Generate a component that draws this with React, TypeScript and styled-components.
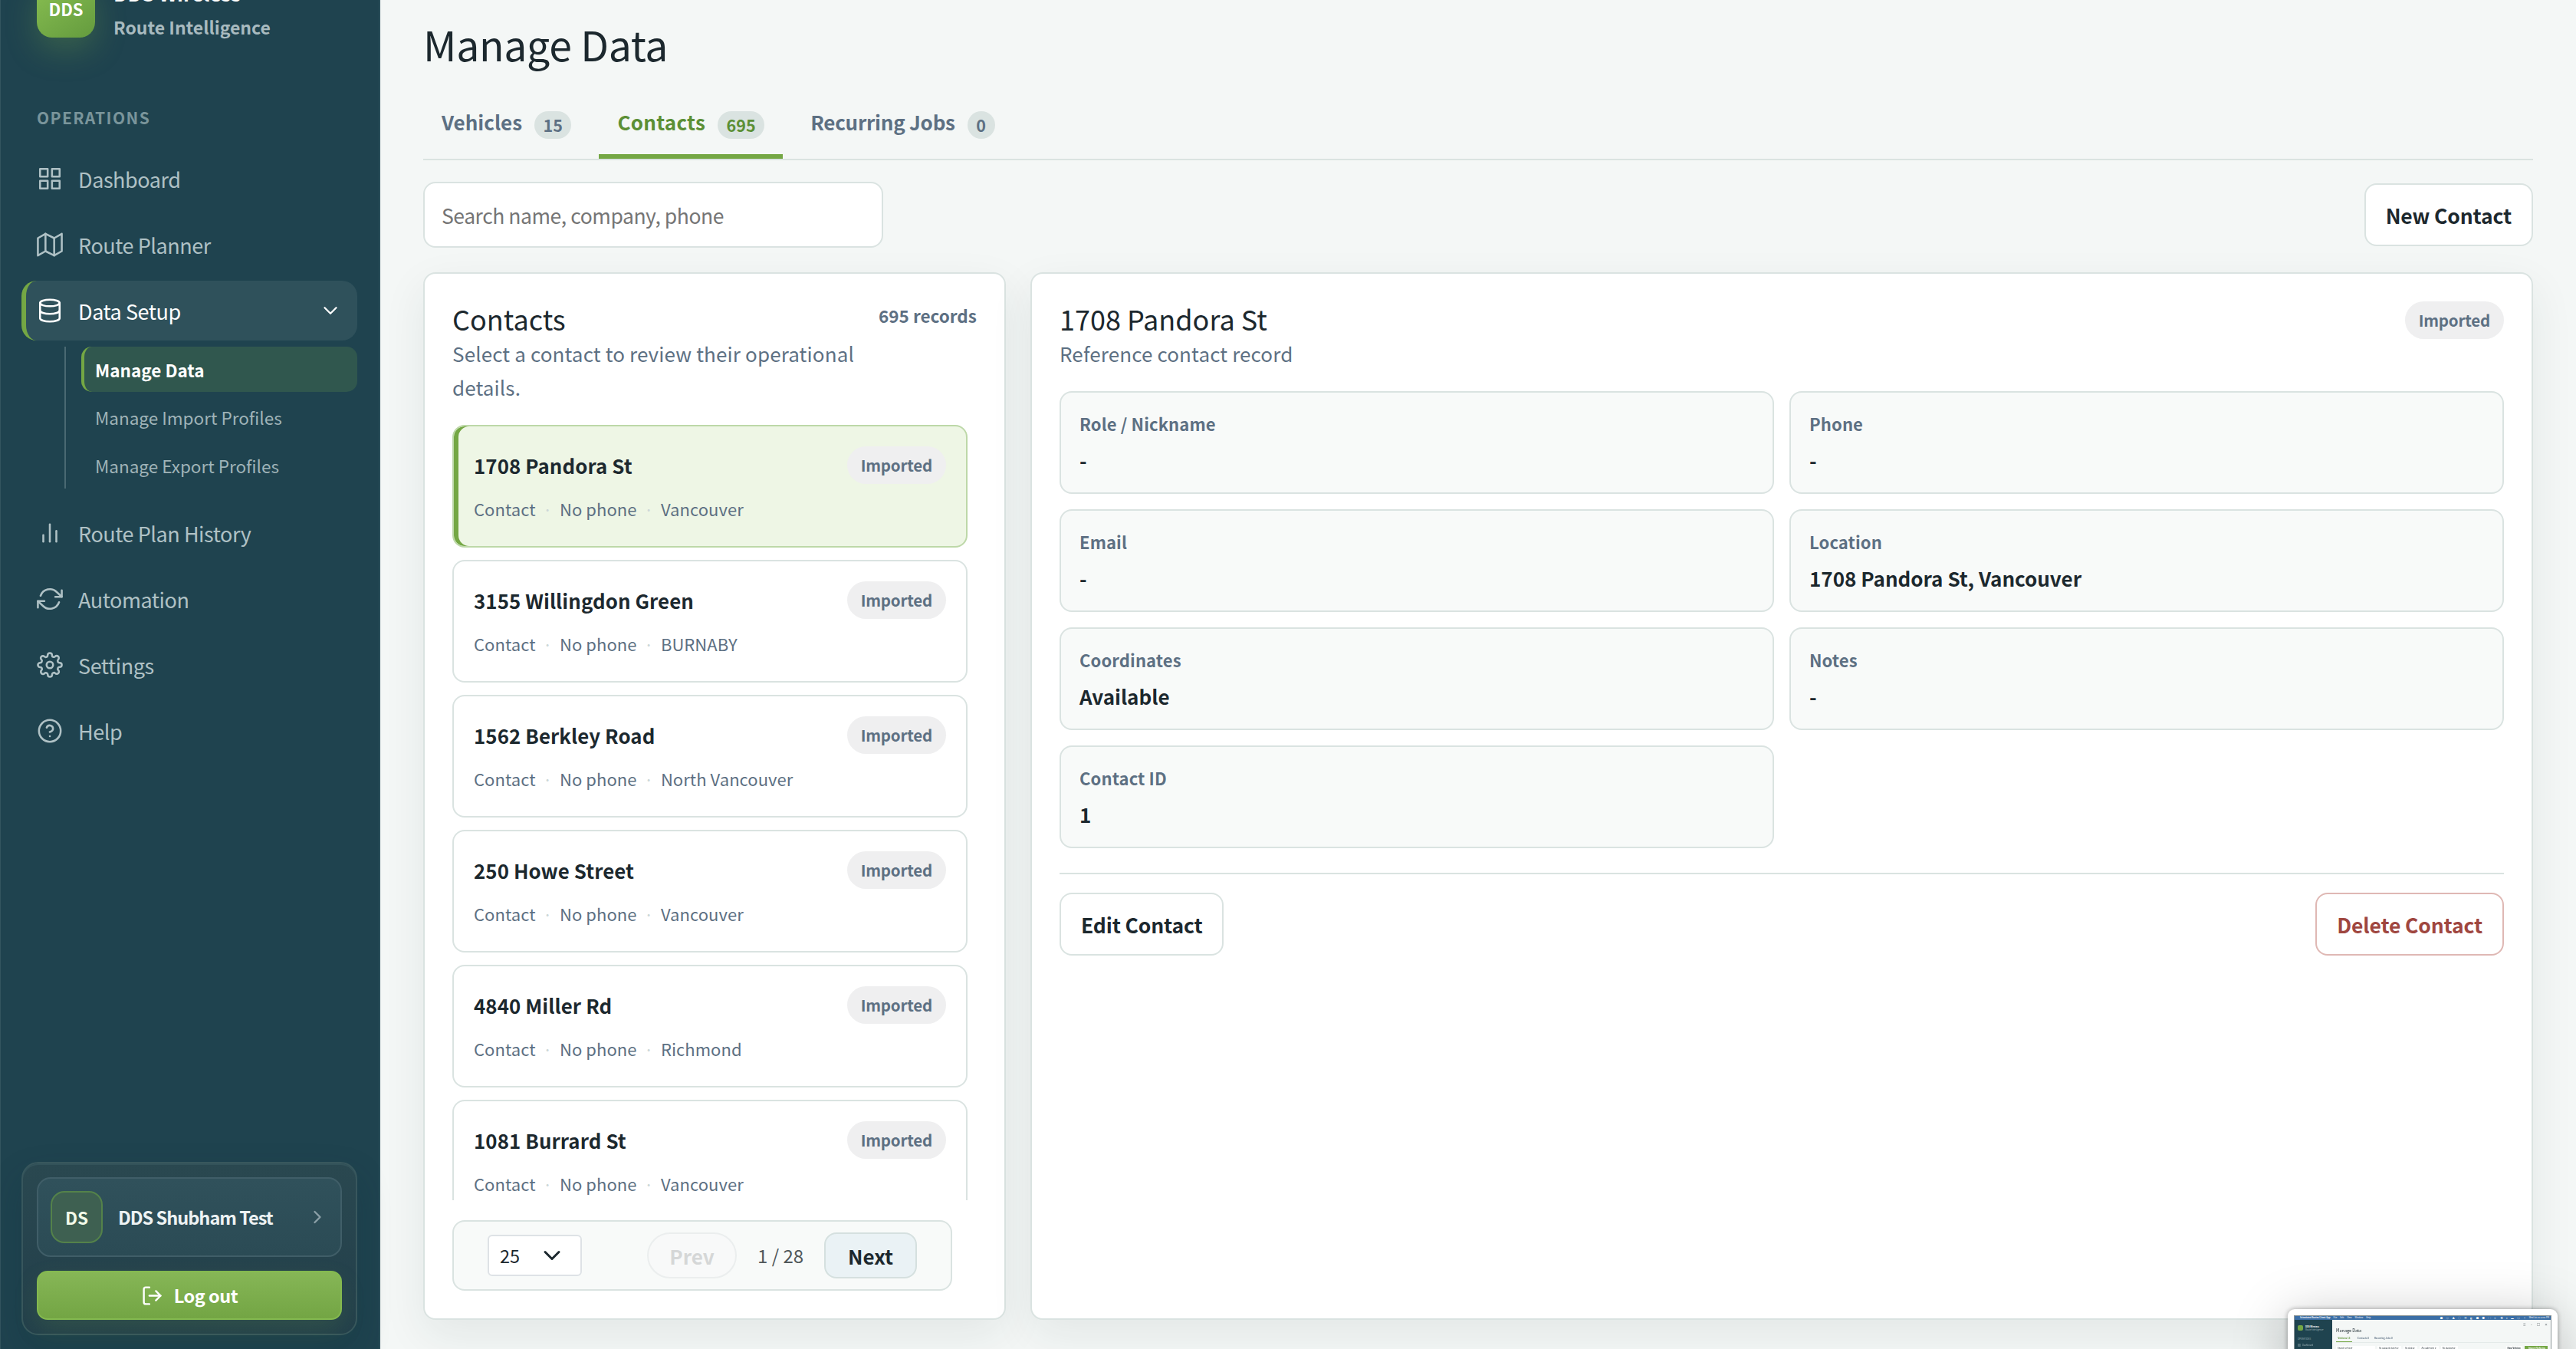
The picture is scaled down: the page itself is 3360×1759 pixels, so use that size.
import React from 'react'
import styled, { createGlobalStyle } from 'styled-components'
import {
  FiBarChart2,
  FiChevronDown,
  FiChevronRight,
  FiDatabase,
  FiGrid,
  FiHelpCircle,
  FiLogOut,
  FiMap,
  FiRefreshCw,
  FiSettings,
} from 'react-icons/fi'

const GlobalStyle = createGlobalStyle`
  * {
    box-sizing: border-box;
  }

  body {
    margin: 0;
    background: #f4f7f6;
    color: #1c282e;
    font-family: 'Noto Sans CJK JP', 'Noto Sans', sans-serif;
    font-size: 26px;
    overflow: hidden;
  }

  h1, h2, p {
    margin: 0;
    font-weight: 400;
  }

  button, input {
    font-family: inherit;
  }
`

const Layout = styled.div`
  display: flex;
  width: 3360px;
  height: 1759px;
  overflow: hidden;
`

/* ---------- sidebar ---------- */

const Sidebar = styled.aside`
  display: flex;
  flex-direction: column;
  flex: none;
  width: 496px;
  padding: 0 28px 18px 27px;
  border-left: 1px solid #33555f;
  border-right: 2px solid #2c505b;
  background: #1f434f;
`

const Brand = styled.div`
  display: flex;
  flex: none;
  gap: 24px;
  height: 76px;
  margin: -27px 0 0 20px;
`

const BrandMark = styled.div`
  width: 76px;
  height: 76px;
  border-radius: 20px;
  background: linear-gradient(145deg, #8ac052, #649b3e);
  box-shadow: 0 16px 40px rgba(116, 167, 68, 0.3);
  color: #fff;
  font-size: 22px;
  font-weight: 700;
  line-height: 77px;
  text-align: center;
`

const BrandText = styled.div`
  display: flex;
  flex-direction: column;
  font-weight: 700;
  white-space: nowrap;
`

const BrandName = styled.span`
  color: #fff;
  font-size: 26px;
  line-height: 36px;
`

const BrandTagline = styled.span`
  margin-top: 8px;
  color: #a8babf;
  font-size: 23px;
  font-weight: 600;
  line-height: 36px;
`

const NavHeading = styled.div`
  margin: 89px 0 26px 20px;
  color: #7a959b;
  font-size: 21px;
  font-weight: 700;
  letter-spacing: 1.4px;
  line-height: 30px;
`

const Nav = styled.nav`
  display: flex;
  flex-direction: column;
  gap: 8px;
`

const NavItem = styled.a<{ $active?: boolean }>`
  display: flex;
  align-items: center;
  width: 438px;
  height: 78px;
  padding: 0 20px 0 14px;
  border-left: 6px solid ${({ $active }) => ($active ? '#74a744' : 'transparent')};
  border-radius: 20px;
  background: ${({ $active }) => ($active ? '#2f515b' : 'transparent')};
  color: ${({ $active }) => ($active ? '#fff' : '#afc1c5')};
  font-size: 27px;
  letter-spacing: -0.45px;

  svg {
    stroke-width: 1.8;
  }

  span {
    flex: 1;
    margin-left: 20px;
  }
`

const SubNav = styled.div`
  display: flex;
  flex-direction: column;
  gap: 4px;
  width: 382px;
  margin: 0 0 11px 56px;
  padding-left: 20px;
  border-left: 2px solid #4a6972;
`

const SubNavItem = styled.a<{ $active?: boolean }>`
  height: 59px;
  padding-left: 14px;
  border-left: 4px solid ${({ $active }) => ($active ? '#74a744' : 'transparent')};
  border-radius: 14px;
  background: ${({ $active }) => ($active ? '#30574e' : 'transparent')};
  color: ${({ $active }) => ($active ? '#fff' : '#9fb3b8')};
  font-size: 22.5px;
  font-weight: ${({ $active }) => ($active ? 700 : 400)};
  line-height: ${({ $active }) => ($active ? 60 : 58)}px;
`

const AccountCard = styled.div`
  display: flex;
  flex-direction: column;
  gap: 18px;
  width: 438px;
  height: 226px;
  margin-top: auto;
  padding: 18px;
  border: 2px solid #38575d;
  border-radius: 22px;
  background: linear-gradient(180deg, #2a4850, #223f4b);
  box-shadow: inset 0 2px 0 #33535a, 0 20px 44px rgba(15, 45, 60, 0.22);
`

const AccountButton = styled.div`
  display: flex;
  align-items: center;
  height: 104px;
  padding: 0 16px 0 16px;
  border: 2px solid #405e68;
  border-radius: 18px;
  background: linear-gradient(180deg, #30515b, #2b4b55);
  color: #edf2f3;
  font-size: 23.5px;
  font-weight: 600;

  span {
    flex: 1;
    margin-left: 20px;
    letter-spacing: -1px;
  }

  svg {
    color: #8ba0a7;
  }
`

const Avatar = styled.div`
  width: 68px;
  height: 68px;
  border: 2px solid #54824a;
  border-radius: 18px;
  background: #3e6051;
  color: #f2fae8;
  font-size: 22.5px;
  line-height: 65px;
  text-align: center;
`

const LogoutButton = styled.button`
  display: flex;
  align-items: center;
  justify-content: center;
  gap: 14px;
  height: 64px;
  border: 2px solid #84b94f;
  border-radius: 14px;
  background: linear-gradient(180deg, #86b656, #73a544);
  box-shadow: 0 14px 32px rgba(116, 167, 68, 0.16);
  color: #fff;
  font-size: 23.5px;
  font-weight: 600;
  letter-spacing: -0.5px;
`

/* ---------- page ---------- */

const Main = styled.main`
  display: flex;
  flex: 1;
  flex-direction: column;
  padding: 22px 56px 38px;
`

const PageTitle = styled.h1`
  height: 99px;
  font-size: 53.5px;
  letter-spacing: -0.3px;
  line-height: 70px;
`

const Tabs = styled.div`
  display: flex;
  gap: 12px;
  height: 88px;
  border-bottom: 2px solid #dae3e1;
`

const Tab = styled.div<{ $active?: boolean; $tracking?: number }>`
  display: flex;
  gap: 16px;
  height: 86px;
  padding: 18px 24px 0;
  border-bottom: 6px solid ${({ $active }) => ($active ? '#74a744' : 'transparent')};
  color: ${({ $active }) => ($active ? '#5b8f35' : '#5d7083')};
  font-size: 26px;
  font-weight: 600;
  letter-spacing: ${({ $tracking = 0 }) => $tracking}px;
  line-height: 40px;
`

const TabCount = styled.span`
  min-width: 36px;
  height: 36px;
  margin-top: 6px;
  padding: 0 11.5px;
  border-radius: 18px;
  background: #dae3e1;
  font-size: 21.5px;
  font-weight: 700;
  letter-spacing: 0;
  line-height: 36px;
  text-align: center;
`

const Toolbar = styled.div`
  display: flex;
  align-items: center;
  justify-content: space-between;
  margin: 28px 0 32px;
`

const SearchInput = styled.input`
  width: 600px;
  height: 86px;
  padding: 0 22px;
  border: 2px solid #dae3e1;
  border-radius: 16px;
  background: #fff;
  font-size: 26.5px;
  letter-spacing: -0.45px;

  &::placeholder {
    color: #757575;
  }
`

const Button = styled.button<{ $danger?: boolean }>`
  height: 82px;
  padding: 0 26px;
  border: 2px solid ${({ $danger }) => ($danger ? '#dfb8b4' : '#dae3e1')};
  border-radius: 16px;
  background: #fff;
  color: ${({ $danger }) => ($danger ? '#9f463f' : '#1c282e')};
  font-size: 26.5px;
  font-weight: 600;
  letter-spacing: -0.15px;
`

const Columns = styled.div`
  display: grid;
  grid-template-columns: 760px 1fr;
  gap: 32px;
  height: 1366px;
`

const Panel = styled.section`
  display: flex;
  flex-direction: column;
  min-height: 0;
  padding: 36px;
  border: 2px solid #dae3e1;
  border-radius: 16px;
  background: #fff;
  box-shadow: 0 20px 56px rgba(31, 51, 55, 0.08);
`

const PanelHead = styled.div`
  display: flex;
  align-items: flex-start;
  justify-content: space-between;
  gap: 24px;
  margin-bottom: 27.5px;
`

const PanelTitle = styled.h2`
  font-size: 36px;
  line-height: 45px;
  margin-bottom: 1px;
`

const PanelText = styled.p`
  color: #5d7083;
  font-size: 26px;
  letter-spacing: 0.13px;
  line-height: 43.5px;
`

const RecordCount = styled.span`
  flex: none;
  color: #5d7083;
  font-size: 22.5px;
  font-weight: 600;
  line-height: 37px;
`

const Badge = styled.span`
  height: 49px;
  padding: 0 18px;
  border-radius: 25px;
  background: #efeff0;
  color: #5d7083;
  font-size: 20.5px;
  font-weight: 600;
  letter-spacing: -0.2px;
  line-height: 49px;
`

const ContactList = styled.div`
  display: flex;
  flex: 1;
  flex-direction: column;
  gap: 16px;
  min-height: 0;
  width: 672px;
  margin-bottom: 26px;
  overflow: hidden;
`

const ContactRow = styled.div<{ $selected?: boolean }>`
  flex: none;
  height: 160px;
  padding: 26px;
  border: 2px solid ${({ $selected }) => ($selected ? '#bdd8a8' : '#dae3e1')};
  border-radius: 16px;
  background: ${({ $selected }) => ($selected ? '#eef6e5' : '#fff')};
  box-shadow: ${({ $selected }) => ($selected ? 'inset 6px 0 0 #74a744' : 'none')};
`

const ContactTop = styled.div`
  display: flex;
  align-items: center;
  justify-content: space-between;
`

const ContactName = styled.span`
  font-size: 25.8px;
  font-weight: 600;
  letter-spacing: 0.1px;
`

const ContactMeta = styled.div`
  display: flex;
  gap: 9.5px;
  margin-top: 14px;
  color: #5d7083;
  font-size: 22px;
  letter-spacing: 0.05px;
  line-height: 36px;

  i {
    color: #cdd7d8;
    font-style: normal;
  }
`

const Pagination = styled.div`
  display: flex;
  align-items: center;
  width: 652px;
  height: 92px;
  padding-left: 44px;
  border: 2px solid #dae3e1;
  border-radius: 16px;
  background: #f8faf9;
`

const PageSize = styled.div`
  display: flex;
  align-items: center;
  justify-content: space-between;
  width: 123px;
  height: 54px;
  margin-right: 85px;
  padding: 0 19px 0 14px;
  border: 2px solid #dee2e6;
  border-radius: 6px;
  background: #fff;
  font-size: 23.5px;
`

const PageButton = styled.button`
  width: 121px;
  height: 60px;
  padding: 0;
  border: 2px solid #d5e0df;
  border-radius: 16px;
  background: #eaf2f5;
  color: #1c282e;
  font-size: 26px;
  font-weight: 600;

  &:disabled {
    width: 117px;
    border-color: #ebeeee;
    border-radius: 30px;
    background: #f8f9f9;
    color: #d5d7d7;
  }
`

const PageStatus = styled.span`
  width: 114px;
  color: #50575a;
  font-size: 24px;
  line-height: 32px;
  text-align: center;
`

const DetailGrid = styled.div`
  display: grid;
  grid-template-columns: 1fr 1fr;
  gap: 20px;
`

const DetailCard = styled.div`
  display: flex;
  flex-direction: column;
  height: 134px;
  padding: 22px 24px;
  border: 2px solid #dae3e1;
  border-radius: 16px;
  background: #f8faf9;
`

const DetailLabel = styled.span`
  color: #5d7083;
  font-size: 22px;
  font-weight: 600;
  letter-spacing: 0.12px;
  line-height: 37px;
`

const DetailValue = styled.span`
  margin-top: 7px;
  font-size: 26px;
  font-weight: 600;
  line-height: 43px;
`

const DetailActions = styled.div`
  display: flex;
  justify-content: space-between;
  margin-top: 32px;
  padding-top: 24px;
  border-top: 2px solid #dae3e1;
`

/* ---------- floating capture preview ---------- */

const Preview = styled.div`
  position: fixed;
  left: 2984px;
  top: 1707px;
  width: 352px;
  height: 230px;
  padding: 8px;
  border-radius: 9px;
  background: #fff;
  box-shadow: 0 0 6px rgba(0, 0, 0, 0.35), 0 12px 70px rgba(0, 0, 0, 0.26);
`

const PreviewScreen = styled.div`
  height: 100%;
  border: 1px solid #8d9698;
  background: #f4f7f6;
`

const PreviewMenuBar = styled.div`
  display: flex;
  align-items: center;
  gap: 4px;
  height: 5px;
  padding: 0 2px 0 3px;
  background: #3b6ea5;
  color: #fff;
  font-size: 2.8px;
  line-height: 5px;
  white-space: nowrap;

  b {
    margin-left: 4px;
  }
`

const PreviewStatusIcons = styled.div`
  display: flex;
  justify-content: space-between;
  width: 112px;
  margin-left: auto;
  font-size: 3.4px;
`

const PreviewBody = styled.div`
  display: flex;
  height: 100%;
`

const PreviewSidebar = styled.div`
  width: 49px;
  padding: 7px 4px;
  background: #1f434f;
  color: #9fb3b8;
  font-size: 2.8px;
  line-height: 4px;
`

const PreviewBrand = styled.div`
  display: flex;
  gap: 3px;
  height: 16px;

  b {
    color: #fff;
  }

  &::before {
    content: '';
    width: 7px;
    height: 7px;
    border-radius: 2px;
    background: #74a744;
  }
`

const PreviewNavItem = styled.div`
  display: flex;
  align-items: center;
  gap: 2px;
  margin-top: 4px;
`

const PreviewContent = styled.div`
  flex: 1;
  padding: 3px 4px 0 5px;
`

const PreviewWindowControls = styled.div`
  display: flex;
  justify-content: flex-end;
  gap: 6px;
  height: 6px;
  font-size: 4px;
  line-height: 6px;
`

const PreviewTitle = styled.div`
  font-size: 5.5px;
  line-height: 11px;
`

const PreviewTabs = styled.div`
  display: flex;
  gap: 7px;
  height: 10px;
  border-bottom: 1px solid #e4eae9;
  color: #5d7083;
  font-size: 2.9px;
  font-weight: 700;
  line-height: 9px;

  span:first-child {
    width: 21px;
    border-bottom: 1px solid #74a744;
    color: #5b8f35;
    text-align: center;
  }
`

const PreviewFilters = styled.div`
  display: flex;
  gap: 3px;
  margin-top: 4px;
  font-size: 2.9px;
  line-height: 7px;

  span {
    padding: 0 3px 0 2px;
    background: #fff;
    white-space: nowrap;
  }

  span:first-child {
    width: 51px;
  }

  b {
    margin-left: auto;
    padding: 0 2px;
    background: #fff;
  }

  b:last-child {
    margin-left: 0;
    padding: 0 3px 0 5px;
    background: #74a744;
    color: #fff;
  }
`

const contacts = [
  { name: '1708 Pandora St', city: 'Vancouver' },
  { name: '3155 Willingdon Green', city: 'BURNABY' },
  { name: '1562 Berkley Road', city: 'North Vancouver' },
  { name: '250 Howe Street', city: 'Vancouver' },
  { name: '4840 Miller Rd', city: 'Richmond' },
  { name: '1081 Burrard St', city: 'Vancouver' },
]

const details = [
  ['Role / Nickname', '-'],
  ['Phone', '-'],
  ['Email', '-'],
  ['Location', '1708 Pandora St, Vancouver'],
  ['Coordinates', 'Available'],
  ['Notes', '-'],
  ['Contact ID', '1'],
]

const statusIcons = ['■', '◎', '▲', '◌', '▣', '◧', '■', '●', '▢', '✦', '◀', '▾', '▬', '○', '▪']

const AppSidebar: React.FC = () => (
  <Sidebar>
    <Brand>
      <BrandMark>DDS</BrandMark>
      <BrandText>
        <BrandName>DDS Wireless</BrandName>
        <BrandTagline>Route Intelligence</BrandTagline>
      </BrandText>
    </Brand>
    <NavHeading>OPERATIONS</NavHeading>
    <Nav>
      <NavItem><FiGrid size={34} /><span>Dashboard</span></NavItem>
      <NavItem><FiMap size={34} /><span>Route Planner</span></NavItem>
      <NavItem $active>
        <FiDatabase size={34} />
        <span>Data Setup</span>
        <FiChevronDown size={30} />
      </NavItem>
      <SubNav>
        <SubNavItem $active>Manage Data</SubNavItem>
        <SubNavItem>Manage Import Profiles</SubNavItem>
        <SubNavItem>Manage Export Profiles</SubNavItem>
      </SubNav>
      <NavItem><FiBarChart2 size={34} /><span>Route Plan History</span></NavItem>
      <NavItem><FiRefreshCw size={34} /><span>Automation</span></NavItem>
      <NavItem><FiSettings size={34} /><span>Settings</span></NavItem>
      <NavItem><FiHelpCircle size={34} /><span>Help</span></NavItem>
    </Nav>
    <AccountCard>
      <AccountButton>
        <Avatar>DS</Avatar>
        <span>DDS Shubham Test</span>
        <FiChevronRight size={28} />
      </AccountButton>
      <LogoutButton>
        <FiLogOut size={29} />
        Log out
      </LogoutButton>
    </AccountCard>
  </Sidebar>
)

const ContactsPanel: React.FC = () => (
  <Panel>
    <PanelHead>
      <div>
        <PanelTitle>Contacts</PanelTitle>
        <PanelText>Select a contact to review their operational details.</PanelText>
      </div>
      <RecordCount>695 records</RecordCount>
    </PanelHead>
    <ContactList>
      {contacts.map(({ name, city }, index) => (
        <ContactRow key={name} $selected={index === 0}>
          <ContactTop>
            <ContactName>{name}</ContactName>
            <Badge>Imported</Badge>
          </ContactTop>
          <ContactMeta>
            <span>Contact</span>
            <i>·</i>
            <span>No phone</span>
            <i>·</i>
            <span>{city}</span>
          </ContactMeta>
        </ContactRow>
      ))}
    </ContactList>
    <Pagination>
      <PageSize>
        25
        <FiChevronDown size={36} />
      </PageSize>
      <PageButton disabled>Prev</PageButton>
      <PageStatus>1 / 28</PageStatus>
      <PageButton>Next</PageButton>
    </Pagination>
  </Panel>
)

const DetailPanel: React.FC = () => (
  <Panel>
    <PanelHead>
      <div>
        <PanelTitle>1708 Pandora St</PanelTitle>
        <PanelText>Reference contact record</PanelText>
      </div>
      <Badge>Imported</Badge>
    </PanelHead>
    <DetailGrid>
      {details.map(([label, value]) => (
        <DetailCard key={label}>
          <DetailLabel>{label}</DetailLabel>
          <DetailValue>{value}</DetailValue>
        </DetailCard>
      ))}
    </DetailGrid>
    <DetailActions>
      <Button>Edit Contact</Button>
      <Button $danger>Delete Contact</Button>
    </DetailActions>
  </Panel>
)

const CapturePreview: React.FC = () => (
  <Preview>
    <PreviewScreen>
      <PreviewMenuBar>
        <b>Scheduled Routes Client App</b>
        <span>File</span>
        <span>Edit</span>
        <span>View</span>
        <span>Window</span>
        <span>Help</span>
        <PreviewStatusIcons>
          {statusIcons.map((icon, index) => (
            <span key={index}>{icon}</span>
          ))}
        </PreviewStatusIcons>
        <span>Wed Jul 15 12:01 PM</span>
      </PreviewMenuBar>
      <PreviewBody>
        <PreviewSidebar>
          <PreviewBrand>
            <div>
              <b>DDS Wireless</b>
              <div>Route Intelligence</div>
            </div>
          </PreviewBrand>
          <div>OPERATIONS</div>
          <PreviewNavItem>
            <FiGrid size={4} />
            Dashboard
          </PreviewNavItem>
        </PreviewSidebar>
        <PreviewContent>
          <PreviewWindowControls>
            <span>≡</span>
            <span>–</span>
            <span>□</span>
            <span>×</span>
          </PreviewWindowControls>
          <PreviewTitle>Manage Data</PreviewTitle>
          <PreviewTabs>
            <span>Vehicles 15</span>
            <span>Contacts 0</span>
            <span>Recurring Jobs 0</span>
          </PreviewTabs>
          <PreviewFilters>
            <span>Search vehicle</span>
            <span>All capacity types ▾</span>
            <span>All skills ▾</span>
            <span>All cadences ▾</span>
            <span>All statuses ▾</span>
            <b>New Vehicle</b>
            <b>Import Vehicles</b>
          </PreviewFilters>
        </PreviewContent>
      </PreviewBody>
    </PreviewScreen>
  </Preview>
)

const App: React.FC = () => (
  <>
    <GlobalStyle />
    <Layout>
      <AppSidebar />
      <Main>
        <PageTitle>Manage Data</PageTitle>
        <Tabs>
          <Tab>Vehicles <TabCount>15</TabCount></Tab>
          <Tab $active $tracking={0.25}>Contacts <TabCount>695</TabCount></Tab>
          <Tab $tracking={-0.25}>Recurring Jobs <TabCount>0</TabCount></Tab>
        </Tabs>
        <Toolbar>
          <SearchInput placeholder="Search name, company, phone" />
          <Button>New Contact</Button>
        </Toolbar>
        <Columns>
          <ContactsPanel />
          <DetailPanel />
        </Columns>
      </Main>
    </Layout>
    <CapturePreview />
  </>
)

export default App
